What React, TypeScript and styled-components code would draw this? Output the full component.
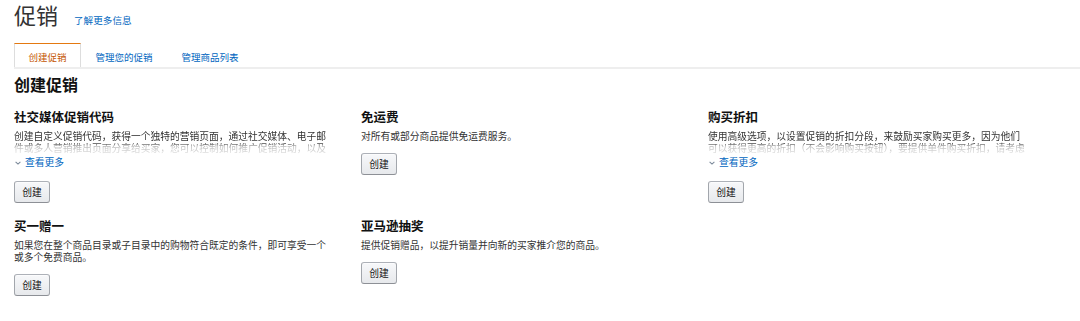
import React from "react";
import styled, { createGlobalStyle } from "styled-components";

const GlobalStyle = createGlobalStyle`
  html, body {
    margin: 0;
    padding: 0;
    background: #ffffff;
  }
  body {
    font-family: Arial, "Liberation Sans", "Noto Sans CJK SC", sans-serif;
    color: #111111;
  }
  * { box-sizing: border-box; }
`;

const Page = styled.div`
  width: 1080px;
  height: 321px;
  overflow: hidden;
  padding-left: 14px;
`;

const Header = styled.div`
  display: flex;
  align-items: baseline;
  gap: 16px;
  padding-top: 4px;
  height: 43px;
`;

const PageTitle = styled.h1`
  margin: 0;
  font-size: 22px;
  line-height: 26px;
  font-weight: 400;
  color: #333333;
`;

const Link = styled.a`
  font-size: 9.6px;
  line-height: 14px;
  color: #0066c0;
  text-decoration: none;
`;

const TabBar = styled.div`
  display: flex;
  height: 26px;
  border-bottom: 2px solid #eeeeee;
`;

const Tab = styled.div<{ $active?: boolean }>`
  display: flex;
  align-items: center;
  height: 24px;
  padding: 2px 13.5px 0;
  font-size: 9.5px;
  color: ${(p) => (p.$active ? "#c45500" : "#0066c0")};
  background: #ffffff;
  border: 1px solid ${(p) => (p.$active ? "#dddddd" : "transparent")};
  border-top: 1px solid ${(p) => (p.$active ? "#e47911" : "transparent")};
  border-bottom: none;
`;

const SectionHeading = styled.h2`
  margin: 7px 0 0;
  font-size: 16px;
  line-height: 20px;
  font-weight: 700;
  color: #111111;
`;

const Grid = styled.div`
  display: grid;
  grid-template-columns: repeat(3, 347px);
  row-gap: 16px;
  margin-top: 14px;
  align-items: start;
`;

const Card = styled.div`
  display: flex;
  flex-direction: column;
  align-items: flex-start;
  max-width: 318px;
`;

const CardTitle = styled.h3`
  margin: 0;
  font-size: 12.5px;
  line-height: 16px;
  font-weight: 700;
  color: #111111;
`;

const Desc = styled.p<{ $clamped?: boolean }>`
  margin: 5px 0 0;
  font-size: 9.75px;
  line-height: 12px;
  color: #333333;
  ${(p) =>
    p.$clamped
      ? `
    max-height: 23px;
    margin-bottom: 1px;
    overflow: hidden;
    -webkit-mask-image: linear-gradient(to bottom, #000 0px, #000 12px, rgba(0,0,0,0.35) 15px, rgba(0,0,0,0.12) 23px);
    mask-image: linear-gradient(to bottom, #000 0px, #000 12px, rgba(0,0,0,0.35) 15px, rgba(0,0,0,0.12) 23px);
  `
      : ""}
`;

const MoreLink = styled.a`
  display: flex;
  align-items: center;
  gap: 4px;
  padding-left: 1px;
  font-size: 9.75px;
  line-height: 16px;
  color: #0066c0;
  text-decoration: none;
  svg {
    display: block;
  }
`;

const Button = styled.button`
  margin-top: 10px;
  width: 36px;
  height: 22px;
  padding: 0;
  font-family: inherit;
  font-size: 9.75px;
  color: #111111;
  border: 1px solid;
  border-color: #adb1b8 #a2a6ac #8d9096;
  border-radius: 3px;
  background: linear-gradient(to bottom, #f7f8fa, #e7e9ec);
  box-shadow: inset 0 1px 0 rgba(255, 255, 255, 0.6);
  cursor: pointer;
`;

const Chevron = () => (
  <svg width="6" height="4" viewBox="0 0 6 4" fill="none">
    <path d="M0.6 0.8 L3 3.1 L5.4 0.8" stroke="#7b8a9a" strokeWidth="1.1" />
  </svg>
);

type Promo = {
  title: string;
  desc: string;
  clamped?: boolean;
};

const promos: Promo[] = [
  {
    title: "社交媒体促销代码",
    desc:
      "创建自定义促销代码，获得一个独特的营销页面，通过社交媒体、电子邮件或多人营销推出页面分享给买家，您可以控制如何推广促销活动，以及谁可以使用该促销代码。",
    clamped: true,
  },
  {
    title: "免运费",
    desc: "对所有或部分商品提供免运费服务。",
  },
  {
    title: "购买折扣",
    desc:
      "使用高级选项，以设置促销的折扣分段，来鼓励买家购买更多，因为他们可以获得更高的折扣（不会影响购买按钮），要提供单件购买折扣，请考虑使用价格折扣促销。",
    clamped: true,
  },
  {
    title: "买一赠一",
    desc: "如果您在整个商品目录或子目录中的购物符合既定的条件，即可享受一个或多个免费商品。",
  },
  {
    title: "亚马逊抽奖",
    desc: "提供促销赠品，以提升销量并向新的买家推介您的商品。",
  },
];

export default function App() {
  return (
    <>
      <GlobalStyle />
      <Page>
        <Header>
          <PageTitle>促销</PageTitle>
          <Link href="#">了解更多信息</Link>
        </Header>
        <TabBar>
          <Tab $active>创建促销</Tab>
          <Tab>管理您的促销</Tab>
          <Tab>管理商品列表</Tab>
        </TabBar>
        <SectionHeading>创建促销</SectionHeading>
        <Grid>
          {promos.map((p) => (
            <Card key={p.title}>
              <CardTitle>{p.title}</CardTitle>
              <Desc $clamped={p.clamped}>{p.desc}</Desc>
              {p.clamped && (
                <MoreLink href="#">
                  <Chevron />
                  查看更多
                </MoreLink>
              )}
              <Button>创建</Button>
            </Card>
          ))}
        </Grid>
      </Page>
    </>
  );
}
